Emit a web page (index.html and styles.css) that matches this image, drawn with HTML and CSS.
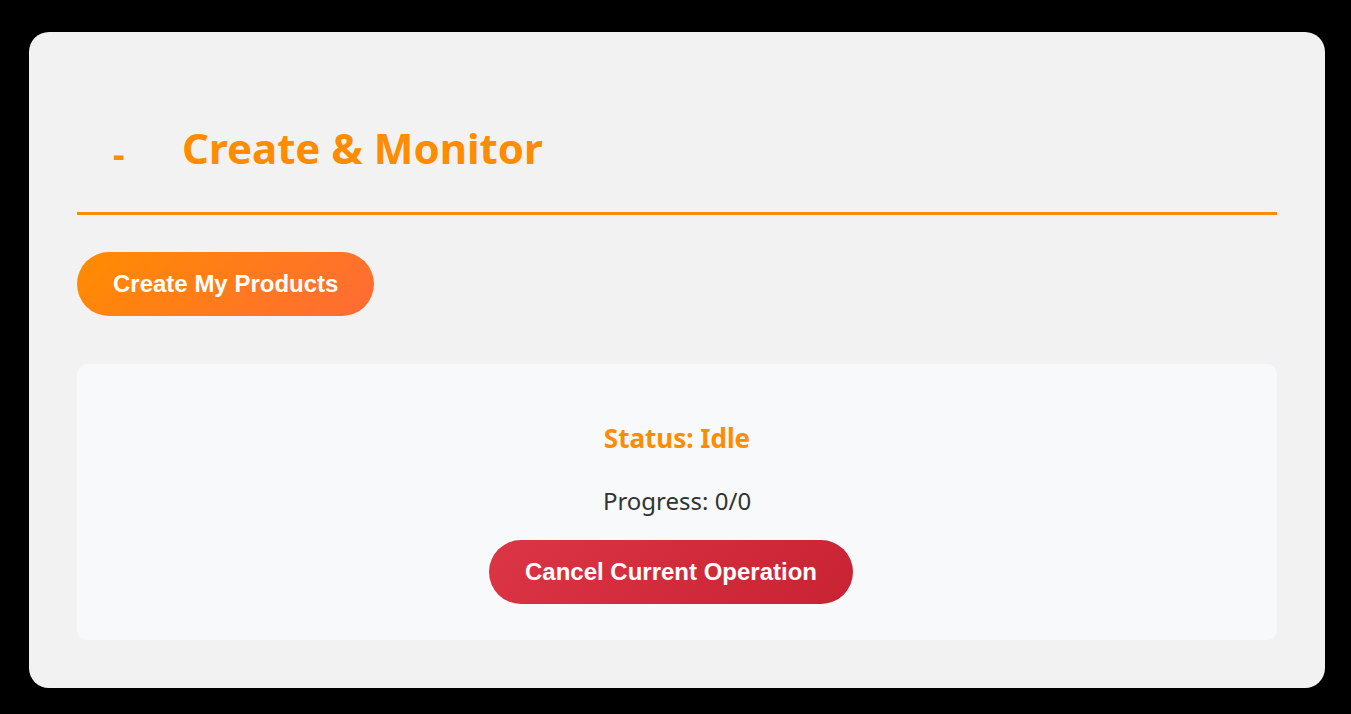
FILE: index.html
```html
<!DOCTYPE html>
<html>
<head>
<meta charset="utf-8">
<link rel="stylesheet" href="styles.css">
</head>
<body>
<div class="card">
  <div class="header">
    <span class="icon">-</span><h1 class="title">Create &amp; Monitor</h1>
  </div>
  <div class="actions">
    <button class="btn btn-primary">Create My Products</button>
  </div>
  <div class="status-box">
    <div class="status">Status: Idle</div>
    <div class="progress">Progress: 0/0</div>
    <button class="btn btn-danger">Cancel Current Operation</button>
  </div>
</div>
</body>
</html>
```
FILE: styles.css
```css
html, body {
  margin: 0;
  padding: 0;
  background: #000;
  height: 100%;
}
body {
  padding: 32px 26px 26px 29px;
  box-sizing: border-box;
  font-family: "Noto Sans", "Open Sans", sans-serif;
}
.card {
  background: #f2f2f2;
  border-radius: 20px;
  padding: 48px;
  box-sizing: border-box;
  height: 656px;
}
.header {
  border-bottom: 3px solid #ff8c00;
  height: 135px;
  box-sizing: border-box;
  padding-top: 39px;
  padding-left: 36px;
  line-height: 1.362;
}
.icon {
  display: inline-block;
  color: #ff8c00;
  font-size: 36px;
  font-weight: 700;
  width: 69px;
  vertical-align: -3px;
}
.title {
  display: inline;
  margin: 0;
  color: #ff8c00;
  font-size: 42px;
  font-weight: 700;
}
.actions {
  padding-top: 37px;
}
.btn {
  border: none;
  border-radius: 32px;
  height: 64px;
  padding: 0 36px;
  color: #fff;
  font-family: "Liberation Sans", Arial, sans-serif;
  font-weight: 700;
  font-size: 24px;
}
.btn-primary {
  background: linear-gradient(135deg, #ff8c00, #ff6b35);
}
.btn-danger {
  background: linear-gradient(135deg, #dc3545, #c82333);
  margin-right: 12px;
}
.status-box {
  margin-top: 48px;
  background: #f8f9fa;
  border-radius: 10px;
  height: 276px;
  box-sizing: border-box;
  display: flex;
  flex-direction: column;
  align-items: center;
  padding-top: 56px;
}
.status {
  color: #ff8c00;
  font-weight: 700;
  font-size: 26px;
}
.progress {
  color: #333;
  font-size: 24px;
  margin-top: 28px;
  margin-bottom: 23px;
}
```
